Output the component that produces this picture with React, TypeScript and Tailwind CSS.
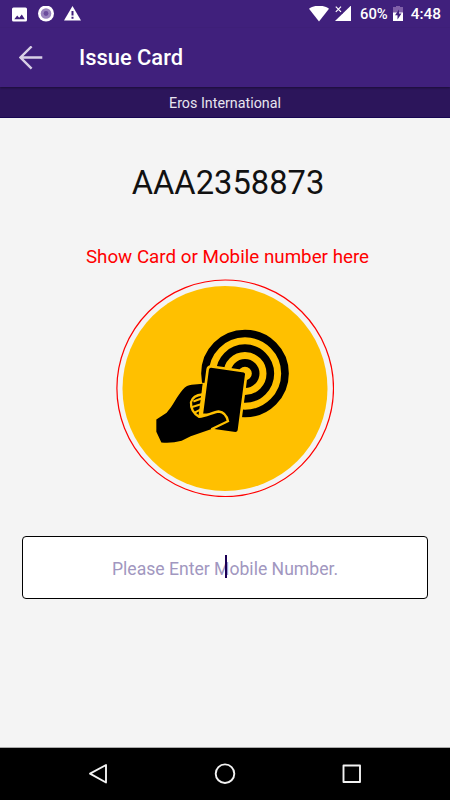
import type { ReactNode } from 'react';

function StatusBar() {
  return (
    <div className="flex h-7 items-center justify-between bg-[#40207c] pl-3 pr-[9px] text-white">
      <div className="flex items-center">
        <svg className="h-[15px] w-[15px]" viewBox="0 0 15 15">
          <rect width="15" height="14" y=".5" rx="1.5" fill="#fff" />
          <path d="M2.3 12.2 5.2 8.6l2 2.2 2.6-3.3 3 4.7z" fill="#40207c" />
        </svg>
        <svg className="ml-[11px] h-4 w-4" viewBox="0 0 16 16">
          <circle cx="8" cy="7.5" r="8" fill="#fff" />
          <circle cx="8" cy="7.5" r="5.3" fill="#9a85be" />
          <circle cx="8" cy="7.5" r="2.4" fill="#6b4d9d" />
        </svg>
        <svg className="ml-[10px] h-4 w-[17px]" viewBox="0 0 17 16">
          <path d="M8.5 0 17 14.5H0z" fill="#fff" />
          <path d="M7.5 5h2v4.400h-2zM7.5 10.800h2v2h-2z" fill="#40207c" />
        </svg>
      </div>
      <div className="flex items-center">
        <svg className="mr-[6px] h-4 w-[20px]" viewBox="0 0 20 16">
          <path d="M0 2.800C5.5-1.400 14.500-1.400 20 2.800L10 15.400z" fill="#fff" />
        </svg>
        <svg className="mr-[9px] h-4 w-4" viewBox="0 0 16 16">
          <path d="M16 -.5V15H0z" fill="#fff" />
          <path d="m0-.5 8 8H0z" fill="#40207c" />
          <path d="m.8.700 5.200 5.200M6 .700.8 5.900" stroke="#fff" strokeWidth="1.200" />
        </svg>
        <span className="text-[14.8px] leading-7 font-medium">60%</span>
        <svg className="ml-[5px] mr-2 h-4 w-[10px]" viewBox="0 0 10 16">
          <path d="M3-.5h4V1h3v6H0V1h3z" fill="#8060a8" />
          <path d="M0 6.500h10V15H0z" fill="#fff" />
          <path d="M6 3.500 2 9.300h2.500v4.200l4-6H6z" fill="#40207c" />
        </svg>
        <span className="text-[15.4px] leading-7 font-medium">4:48</span>
      </div>
    </div>
  );
}

function TapCardArt() {
  return (
    <svg className="h-[218px] w-[218px]" viewBox="116 279.3 218 218">
      <circle cx="225.200" cy="388.600" r="108.300" fill="none" stroke="#f00" strokeWidth="1.200" />
      <circle cx="225" cy="388.800" r="102.500" fill="#ffc000" />

      {/* hand, card and reader waves */}
      <g transform="translate(150 320.5) scale(.33333)">
        <g fill="none" stroke="#000" strokeWidth="23">
          <circle cx="285" cy="160" r="120" />
          <circle cx="285" cy="160" r="76" />
          <circle cx="285" cy="160" r="32" />
        </g>
        <path d="M140 188H170V300H140z" fill="#ffc000" />
        <path
          d="M184 139 282 153Q290 155 289 163L267 330Q266 340 256 339L160 326Q150 324 151 315L173 147Q175 138 184 139z"
          fill="#000"
          stroke="#ffc000"
          strokeWidth="8"
        />
        {/* clears the card corner below the thumb */}
        <path d="M140 280H190V345H140z" fill="#ffc000" />
        <path
          d="M19 298 50 278C70 255 80 230 98 209 107 198 115 195 125 194L159 191 148 288C170 287 188 276 206 274 222 276 231 290 234 303L187 326 122 348 95 362Q65 370 34 367L19 335z"
          fill="#000"
        />
        <path
          d="M157 223Q129 225 123 246 121 274 147 290C170 288 188 276 206 274 222 276 231 290 234 303L184 327"
          fill="none"
          stroke="#ffc000"
          strokeWidth="7"
        />
        <path d="M161 192 148 290" stroke="#ffc000" strokeWidth="6" />
        <path d="M156 234 130 244M153 252 124 261M151 268 134 277" stroke="#ffc000" strokeWidth="6" />
      </g>
    </svg>
  );
}

function NavButton({ children }: { children: ReactNode }) {
  return (
    <button className="flex h-8 w-8 items-center justify-center">
      <svg className="h-6 w-6" viewBox="0 0 24 24" fill="none" stroke="#f2f2f2" strokeWidth="1.900" strokeLinejoin="round">
        {children}
      </svg>
    </button>
  );
}

export default function App() {
  return (
    <div className="flex h-[800px] w-[450px] flex-col overflow-hidden bg-[#f4f4f4] font-[Roboto,sans-serif]">
      <StatusBar />

      <header className="z-10 flex h-[59px] items-center bg-[#40207c] pl-[19px] text-white shadow-[0_1px_2px_rgba(0,0,0,0.4)]">
        <svg className="h-6 w-6" viewBox="0 0 24 24" fill="none" stroke="#d8d0e6" strokeWidth="2.400">
          <path d="M23.300 11.500H1.700M12.600.400 1.500 11.500l11.100 11.100" />
        </svg>
        <h1 className="ml-9 pt-px text-[21.9px] leading-7 font-medium">Issue Card</h1>
      </header>

      <div className="h-[31px] border-b border-[#170652] bg-[#2c155b] text-center text-[14.3px] leading-[33px] text-[#e8e4ef]">
        Eros International
      </div>

      <main className="flex flex-1 flex-col items-center">
        <p className="mt-[45px] ml-[6px] text-[32.700px] leading-10 text-[#111]">AAA2358873</p>
        <p className="mt-[42px] ml-[5px] text-[18.8px] leading-6 text-[#f00]">Show Card or Mobile number here</p>
        <div className="mt-[10px]">
          <TapCardArt />
        </div>
        <div className="mt-[39px] flex h-[63px] w-[406px] items-center justify-center rounded border border-black bg-white">
          <span className="relative pt-[3px] text-[17.6px] text-[#a197c0]">
            Please Enter Mobile Number.
            <span className="absolute top-[2px] left-1/2 h-[23px] w-[2px] bg-[#1b0055]" />
          </span>
        </div>
      </main>

      <nav className="flex h-[53px] items-center justify-between border-t border-[#aaa] bg-black px-[82px]">
        <NavButton>
          <path d="M20 3v17.500L4 11.700z" />
        </NavButton>
        <NavButton>
          <circle cx="12" cy="11.700" r="9.300" />
        </NavButton>
        <NavButton>
          <rect x="3.500" y="3.500" width="16.500" height="16.500" />
        </NavButton>
      </nav>
    </div>
  );
}
